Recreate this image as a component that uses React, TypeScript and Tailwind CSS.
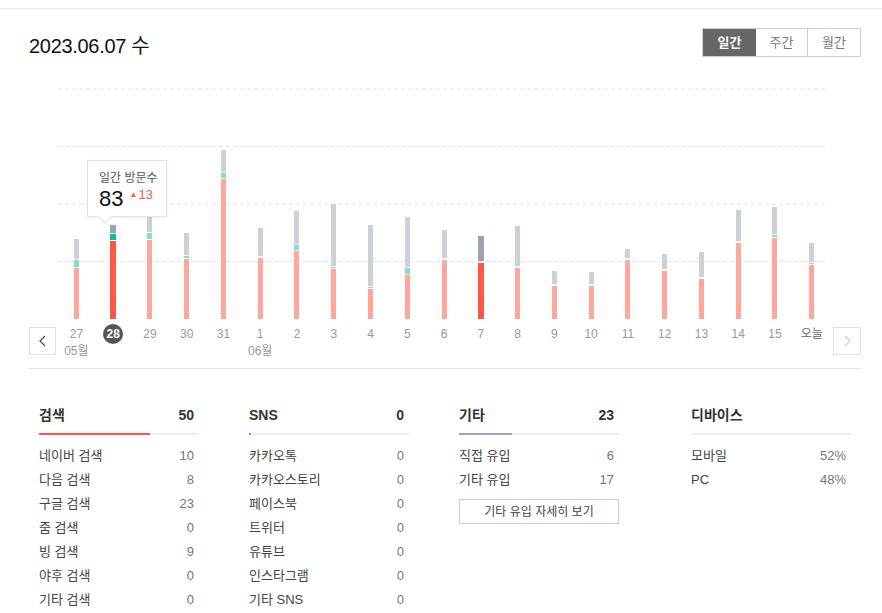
import React from "react";

type Bar = { label: string; pink: number; teal: number; gray: number; month?: string; mode?: "sel" | "hot" };

const BARS: Bar[] = [
    { label: "27", pink: 51, teal: 7, gray: 20, month: "05월" },
    { label: "28", pink: 78, teal: 6, gray: 8, mode: "sel" },
    { label: "29", pink: 79, teal: 6, gray: 19 },
    { label: "30", pink: 60, teal: 2, gray: 22 },
    { label: "31", pink: 140, teal: 5, gray: 22 },
    { label: "1", pink: 61, teal: 0, gray: 28, month: "06월" },
    { label: "2", pink: 68, teal: 5, gray: 33 },
    { label: "3", pink: 50, teal: 1, gray: 62 },
    { label: "4", pink: 30, teal: 1, gray: 61 },
    { label: "5", pink: 44, teal: 6, gray: 50 },
    { label: "6", pink: 59, teal: 0, gray: 28 },
    { label: "7", pink: 56, teal: 0, gray: 25, mode: "hot" },
    { label: "8", pink: 51, teal: 0, gray: 40 },
    { label: "9", pink: 33, teal: 0, gray: 13 },
    { label: "10", pink: 33, teal: 0, gray: 12 },
    { label: "11", pink: 59, teal: 0, gray: 9 },
    { label: "12", pink: 48, teal: 0, gray: 15 },
    { label: "13", pink: 40, teal: 0, gray: 25 },
    { label: "14", pink: 76, teal: 0, gray: 31 },
    { label: "15", pink: 81, teal: 2, gray: 27 },
    { label: "오늘", pink: 54, teal: 1, gray: 19 },
];

const STATS = [
    {
        title: "검색",
        total: "50",
        fill: "w-[111px] bg-[#ff5745]",
        rows: [
            ["네이버 검색", "10"],
            ["다음 검색", "8"],
            ["구글 검색", "23"],
            ["줌 검색", "0"],
            ["빙 검색", "9"],
            ["야후 검색", "0"],
            ["기타 검색", "0"],
        ],
    },
    {
        title: "SNS",
        total: "0",
        fill: "w-[2px] bg-[#2ed1b2]",
        rows: [
            ["카카오톡", "0"],
            ["카카오스토리", "0"],
            ["페이스북", "0"],
            ["트위터", "0"],
            ["유튜브", "0"],
            ["인스타그램", "0"],
            ["기타 SNS", "0"],
        ],
    },
    {
        title: "기타",
        total: "23",
        fill: "w-[53px] bg-[#9ba3ac]",
        rows: [
            ["직접 유입", "6"],
            ["기타 유입", "17"],
        ],
        button: "기타 유입 자세히 보기",
    },
];

function ChartBar({ bar }: { bar: Bar }) {
    const sel = bar.mode === "sel";
    const hot = bar.mode === "hot";
    const w = sel || hot ? "w-[6px]" : "w-[5px]";
    return (
        <div className={`flex flex-col items-stretch ${w}`}>
            <div className={sel || hot ? "bg-[#9ba3ac]" : "bg-[#cdd1d5]"} style={{ height: bar.gray }} />
            {bar.teal > 0 ? (
                <>
                    <div className="h-px" />
                    <div className={sel ? "bg-[#00c2a3]" : "bg-[#7fe0cc]"} style={{ height: bar.teal }} />
                    <div className="h-px" />
                </>
            ) : (
                <div className="h-[2px]" />
            )}
            <div className={sel || hot ? "bg-[#ff5745]" : "bg-[#ffa79c]"} style={{ height: bar.pink }} />
        </div>
    );
}

export default function App() {
    return (
        <div className="w-[882px] bg-white pt-[8px] font-['Liberation_Sans','Noto_Sans_CJK_KR',sans-serif] text-[#333]">
            <div className="border-t border-[#ececec] pl-[29px] pr-[21px]">
                {/* header */}
                <div className="flex items-start justify-between pt-[19px]">
                    <h1 className="mt-[4px] text-[20px] leading-[28px] tracking-[-0.3px] text-[#111]">2023.06.07 수</h1>
                    <div className="flex h-[29px] border border-[#c9ced8] text-[13px]">
                        <button className="w-[53px] bg-[#666] font-bold text-white">일간</button>
                        <button className="w-[52px] border-r border-[#c9ced8] text-[#777]">주간</button>
                        <button className="w-[52px] text-[#777]">월간</button>
                    </div>
                </div>

                {/* chart */}
                <div className="relative ml-[29px] mt-[20px] h-[239px] w-[772px]">
                    <svg className="absolute inset-0" width="772" height="239">
                        {[9, 66.5, 124, 181.5].map((y) => (
                            <line key={y} x1="0" x2="770" y1={y} y2={y} stroke="#e3e3e3" strokeDasharray="4 3" />
                        ))}
                    </svg>
                    <div className="relative flex h-full items-end">
                        {BARS.map((b) => (
                            <div key={b.label} className="flex flex-1 justify-center">
                                <ChartBar bar={b} />
                            </div>
                        ))}
                    </div>
                    {/* tooltip */}
                    <div className="absolute left-[29px] top-[80px] h-[57px] w-[80px] border border-[#dfe3ea] bg-white pl-[11px] pt-[9px] shadow-[0_1px_3px_rgba(0,0,0,0.06)]">
                        <p className="text-[12px] leading-[16px] text-[#555]">일간 방문수</p>
                        <div className="flex items-start">
                            <span className="text-[22px] leading-[26px] text-[#111]">83</span>
                            <span className="ml-[6px] mt-[3px] text-[8px] leading-[12px] text-[#ff5745]">▲</span>
                            <span className="ml-[1px] mt-[1px] text-[13px] leading-[16px] text-[#ff5745]">13</span>
                        </div>
                        <div className="absolute -bottom-[6px] left-[12px] h-[10px] w-[10px] rotate-45 border-b border-r border-[#dfe3ea] bg-white" />
                    </div>
                </div>

                {/* axis */}
                <div className="flex items-start">
                    <button className="mt-[8px] flex h-[28px] w-[27px] items-center justify-center border border-[#dde0e6] bg-white">
                        <svg width="10" height="12" viewBox="0 0 10 12" fill="none" stroke="#444" strokeWidth="1.2">
                            <path d="M7 1 L2 6 L7 11" />
                        </svg>
                    </button>
                    <div className="ml-[2px] flex w-[772px] pt-[5px]">
                        {BARS.map((b) => (
                            <div key={b.label} className="flex flex-1 flex-col items-center">
                                <div className="flex h-[20px] items-center justify-center">
                                    {b.mode === "sel" ? (
                                        <span className="flex h-[20px] w-[20px] items-center justify-center rounded-full bg-[#555] text-[12px] font-bold text-white">
                                            {b.label}
                                        </span>
                                    ) : (
                                        <span className={`text-[12px] ${b.label === "오늘" ? "text-[#666]" : "text-[#999]"}`}>{b.label}</span>
                                    )}
                                </div>
                                <span className="h-[14px] text-[12px] leading-[14px] text-[#999]">{b.month ?? ""}</span>
                            </div>
                        ))}
                    </div>
                    <button className="ml-[3px] mt-[8px] flex h-[28px] w-[28px] items-center justify-center border border-[#dde0e6] bg-white">
                        <svg width="10" height="12" viewBox="0 0 10 12" fill="none" stroke="#ccc" strokeWidth="1.2">
                            <path d="M3 1 L8 6 L3 11" />
                        </svg>
                    </button>
                </div>

                <div className="mt-[10px] border-t border-[#e5e5e5]" />

                {/* stats */}
                <div className="flex pl-[10px] pt-[36px]">
                    {STATS.map((s, i) => (
                        <div key={s.title} className={`w-[160px] ${i > 0 ? "ml-[50px]" : ""}`}>
                            <div className="flex h-[20px] items-center justify-between pr-[5px] text-[14px] font-bold text-[#333]">
                                <span>{s.title}</span>
                                <span>{s.total}</span>
                            </div>
                            <div className="mt-[8px] h-[2px] bg-[#eeeeee]">
                                <div className={`h-full ${s.fill}`} />
                            </div>
                            <div className="mt-[9px]">
                                {s.rows.map(([k, v]) => (
                                    <div key={k} className="flex h-[24px] items-center justify-between pr-[5px] text-[13px]">
                                        <span className="text-[#444]">{k}</span>
                                        <span className="text-[#777]">{v}</span>
                                    </div>
                                ))}
                            </div>
                            {s.button && (
                                <button className="mt-[7px] h-[25px] w-[160px] border border-[#c9ced8] text-[12px] text-[#444]">
                                    {s.button}
                                </button>
                            )}
                        </div>
                    ))}
                    <div className="ml-[72px] w-[160px]">
                        <div className="flex h-[20px] items-center text-[14px] font-bold text-[#333]">디바이스</div>
                        <div className="mt-[8px] h-[2px] bg-[#eeeeee]" />
                        <div className="mt-[9px]">
                            {[
                                ["모바일", "52%"],
                                ["PC", "48%"],
                            ].map(([k, v]) => (
                                <div key={k} className="flex h-[24px] items-center justify-between pr-[5px] text-[13px]">
                                    <span className="text-[#444]">{k}</span>
                                    <span className="text-[#777]">{v}</span>
                                </div>
                            ))}
                        </div>
                    </div>
                </div>
            </div>
        </div>
    );
}
